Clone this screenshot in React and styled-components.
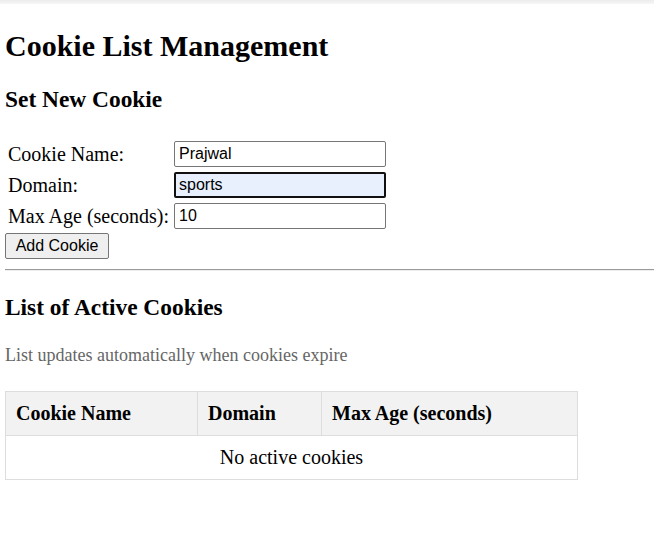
import React from 'react';
import styled, { createGlobalStyle } from 'styled-components';

// Global
const GlobalStyle = createGlobalStyle`
	html, body {
		margin: 0;
		padding: 0;
		background: #ffffff;
	}
	body {
		font-family: "Liberation Serif", "Times New Roman", serif;
		font-size: 20px;
		color: #000000;
	}
`;

// Data
const fields = [
	{ label: 'Cookie Name:', value: 'Prajwal' },
	{ label: 'Domain:', value: 'sports', focused: true },
	{ label: 'Max Age (seconds):', value: '10' },
];

const columns = [
	{ title: 'Cookie Name', width: 192 },
	{ title: 'Domain', width: 124 },
	{ title: 'Max Age (seconds)', width: 256 },
];

// Component
const App = () => {
	return (
		<>
			<GlobalStyle/>
			<TopBar/>
			<Page>
				<Title>Cookie List Management</Title>
				<SectionTitle $top={23.9}>Set New Cookie</SectionTitle>
				<FormGrid>
					{
						fields.map((field) => {
							return (
								<React.Fragment key={ field.label }>
									<Label>{ field.label }</Label>
									<Input type="text" defaultValue={ field.value } $focused={ field.focused }/>
								</React.Fragment>
							);
						})
					}
				</FormGrid>
				<Button type="button">Add Cookie</Button>
				<Divider/>
				<SectionTitle $top={23.4}>List of Active Cookies</SectionTitle>
				<Hint>List updates automatically when cookies expire</Hint>
				<Table>
					<colgroup>
						{ columns.map((col) => <col key={ col.title } style={{ width: col.width }}/>) }
					</colgroup>
					<thead>
						<tr>
							{ columns.map((col) => <HeadCell key={ col.title }>{ col.title }</HeadCell>) }
						</tr>
					</thead>
					<tbody>
						<tr>
							<EmptyCell colSpan={ 3 }>No active cookies</EmptyCell>
						</tr>
					</tbody>
				</Table>
			</Page>
		</>
	);
};

// Styled
const TopBar = styled.div`
	height: 4px;
	background: linear-gradient(#ececec, #f6f6f6);
`;

const Page = styled.main`
	display: flow-root;
	padding-left: 5px;
`;

const Title = styled.h1`
	font-size: 30px;
	font-weight: bold;
	line-height: normal;
	margin: 24.6px 0 0;
`;

const SectionTitle = styled.h3`
	font-size: 23.4px;
	font-weight: bold;
	line-height: normal;
	margin: ${ (props) => props.$top }px 0 0;
`;

const FormGrid = styled.div`
	display: grid;
	grid-template-columns: 160px 212px;
	grid-auto-rows: 26px;
	column-gap: 6px;
	row-gap: 5px;
	align-items: center;
	margin-top: 27.6px;
	padding-left: 3px;
`;

const Label = styled.span`
	font-size: 20px;
	white-space: nowrap;
`;

const Input = styled.input`
	box-sizing: border-box;
	width: 212px;
	height: 26px;
	font-family: "Liberation Sans", Arial, sans-serif;
	font-size: 16px;
	color: #000000;
	border-radius: 2px;
	outline: none;
	border: ${ (props) => props.$focused ? '2px solid #101010' : '1px solid #767676' };
	padding: 0 ${ (props) => props.$focused ? '3px' : '4px' };
	background: ${ (props) => props.$focused ? '#e8f0fe' : '#ffffff' };
`;

const Button = styled.button`
	display: block;
	box-sizing: border-box;
	width: 104px;
	height: 26px;
	margin-top: 4px;
	padding: 0;
	font-family: "Liberation Sans", Arial, sans-serif;
	font-size: 16px;
	color: #000000;
	background: #efefef;
	border: 1px solid #767676;
	border-radius: 2px;
`;

const Divider = styled.hr`
	margin: 10px 0;
	border: none;
	border-top: 1px solid #9a9a9a;
	border-bottom: 1px solid #eeeeee;
`;

const Hint = styled.p`
	font-size: 18px;
	line-height: normal;
	color: #666666;
	margin: 23.4px 0 0;
`;

const Table = styled.table`
	width: 572px;
	table-layout: fixed;
	border-collapse: collapse;
	margin-top: 25.1px;
	font-size: 20px;
`;

const HeadCell = styled.th`
	padding: 10px;
	text-align: left;
	font-weight: bold;
	background: #f2f2f2;
	border: 1px solid #dddddd;
	line-height: normal;
`;

const EmptyCell = styled.td`
	padding: 10px;
	text-align: center;
	border: 1px solid #dddddd;
	line-height: normal;
`;

// Export
export default App;
